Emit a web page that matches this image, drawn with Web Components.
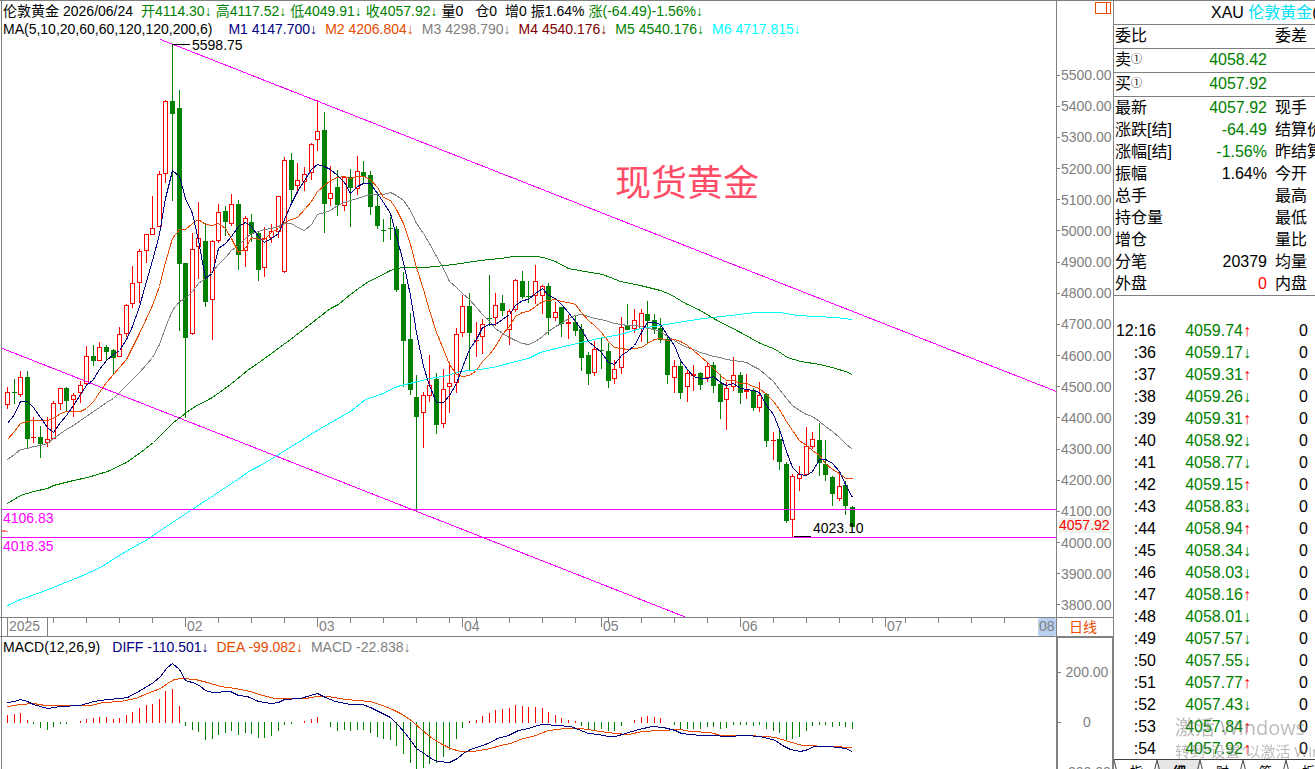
<!DOCTYPE html>
<html lang="zh-CN">
<head>
<meta charset="utf-8">
<title>伦敦黄金 日线</title>
<style>
html, body { margin: 0; height: 100%; overflow: hidden; background: #fff; }
body { font-family: "Liberation Sans", "Noto Sans CJK SC", sans-serif; font-size: 14px; color: #000; }
</style>
</head>
<body>
<gold-terminal></gold-terminal>
<script>
const GREEN = '#008000', RED = '#ff0000', NAVY = '#000080', ORANGE = '#e64b00', GRAY = '#808080', PINK = '#ff00ff', CYAN = '#00ffff';

/* direction, high, body top, body bottom, low */
const CANDLES = `r387,392,404,408 g379,392,392,403 r371,377,394,396 g371,377,438,448 r417,437,437,442 g426,437,443,457 r417,439,442,446 r401,403,438,438 r388,388,403,409 g387,388,400,411
r393,395,399,416 r381,385,392,402 r346,356,383,384 g345,356,360,365 r342,347,360,360 g345,347,351,360 g349,350,357,374 r327,334,356,356 r304,305,333,336 r266,283,303,307
r249,251,282,302 r234,234,250,262 r196,228,234,234 r171,174,226,226 r100,101,173,182 g44,101,113,200 g90,108,263,330 g263,263,337,417 r233,249,333,334 r202,238,246,278
g223,241,301,306 r240,241,299,339 r204,212,240,242 g206,211,221,235 r194,204,223,225 g200,204,254,269 r216,218,250,266 g214,222,233,241 g232,233,269,280 r227,238,267,276
r224,231,237,242 r196,196,231,237 r157,160,271,272 g153,160,189,204 r163,180,185,193 r167,174,181,190 r143,144,172,179 r100,131,139,150 g112,130,203,232 r166,193,198,205
g170,187,204,215 r177,177,205,210 g169,177,187,226 r156,171,188,194 g161,172,176,183 g171,175,206,214 g192,206,225,228 g219,230,230,241 g217,228,228,239 g226,229,289,291
g272,284,340,386 g313,339,389,394 g375,397,416,511 r392,395,412,447 r355,385,395,401 g373,379,424,433 r369,389,423,427 r362,383,386,412 r328,334,382,392 r295,306,332,336
g293,306,332,370 r322,340,340,356 r319,324,336,353 g275,318,318,325 r293,305,317,325 g295,303,310,315 r309,311,329,344 r279,280,309,311 g271,281,296,298 g281,296,296,302
r265,281,295,303 r285,286,295,313 g283,286,317,334 r302,312,317,320 g307,307,323,336 r315,322,323,338 g315,322,330,335 g324,329,357,370 g352,355,373,384 r341,349,372,375
g337,350,350,368 g343,351,380,387 r360,369,378,383 r317,327,367,373 g304,326,329,329 r309,320,328,332 r309,313,328,341 g301,314,320,343 g314,320,328,333 g318,328,339,342
g337,339,374,383 r360,366,377,392 g359,366,392,398 r369,373,386,401 r365,374,375,390 g372,373,384,389 r363,366,377,381 g362,365,385,392 g374,384,401,418 r382,388,399,429
r357,375,386,390 g372,375,392,403 r374,390,391,398 g388,390,407,410 r382,395,407,411 g393,394,440,446 r432,440,440,459 g431,439,461,469 g462,464,520,522 r474,476,519,536
r466,474,478,490 r427,446,474,474 r432,439,446,448 g423,440,462,475 g440,464,474,480 g476,477,493,505 r473,486,498,500 g481,485,505,514 g506,507,526,526`
  .trim().split(/\s+/).map(s => { const [hi, top, bot, lo] = s.slice(1).split(',').map(Number); return { up: s[0] === 'r', hi, top, bot, lo }; });

/* bar ends around the zero line at 722; zeros are missing bars */
const BARS = '715 714 713 720 723 727 729 726 723 723 0 721 719 718 717 717 719 718 715 712 708 705 704 699 691 689 706 725 729 731 739 738 734 732 730 734 732 733 737 737 735 730 724 723 0 721 719 717 0 726 730 729 730 729 729 732 736 738 739 745 753 762 768 767 763 762 756 749 738 727 721 720 716 713 710 709 708 705 706 707 707 708 712 715 718 720 721 725 729 729 728 730 730 725 0 720 717 716 717 718 0 724 728 728 728 728 726 726 728 727 724 724 724 725 724 728 730 732 739 738 736 730 725 724 724 726 725 726 728'.split(' ').map(Number);

const M60 = '7,503 20,495 33,491 47,488 53,485 73,480 87,477 107,471 126,462 140,452 153,442 163,432 173,422 181,416 186,412 193,407 212,397 230,384 247,370 260,361 290,339 330,308 338,304 350,294 365,283 390,270 401,267 425,267 445,265 460,263 480,260 500,258 513,256 535,256 543,257 555,261 568,268 590,272 602,274 610,277 620,281 640,285 660,290 670,294 685,303 700,310 713,318 740,332 760,343 775,349 787,357 800,361 820,364 835,368 845,371 852,374';
const M200 = '7,605 20,599 40,592 60,584 80,576 100,567 114,558 127,550 147,539 160,530 187,512 207,499 240,477 250,470 260,465 275,456 320,428 350,411 365,399 380,394 397,386 417,381 430,378 447,375 460,371 480,369 497,366 515,361 528,358 540,352 555,348 568,345 585,341 598,338 620,334 640,328 660,325 690,320 703,318 730,315 755,312 780,312 797,315 815,316 835,317 852,319';
const DIFF = '7,702 14,701 20,699 27,701 33,704 40,706 47,708 60,706 80,705 93,701 107,699 120,698 127,697 140,690 153,682 160,676 166,668 172,663 179,669 185,680 195,683 200,686 205,690 212,692 230,691 238,695 247,696 258,701 271,703 278,702 284,699 300,698 317,693 325,697 335,701 350,704 362,704 370,707 384,714 390,717 398,725 405,733 411,741 416,748 425,754 432,759 438,761 449,762 457,758 463,753 470,749 482,745 490,742 497,738 508,735 518,730 528,728 537,725 543,724 557,725 570,726 578,729 588,733 598,734 608,736 615,736 625,733 638,729 652,726 663,727 675,730 681,733 700,735 712,735 727,736 745,735 760,736 775,740 782,745 790,749 800,751 808,749 813,746 830,746 845,748 852,751';
const DEA = '7,706 20,704 33,703 45,705 90,705 103,702 120,701 135,698 147,693 160,688 167,683 174,679 182,678 195,679 207,682 220,686 235,688 250,691 262,695 275,698 305,698 317,696 328,696 345,699 370,701 382,705 392,709 402,714 412,721 422,730 432,738 440,743 450,748 460,751 473,751 490,748 500,745 510,743 520,739 535,735 548,730 565,728 580,728 600,731 615,733 628,734 642,731 660,730 680,729 690,731 710,732 720,735 745,735 765,736 775,737 788,741 802,745 830,746 852,747';

const barX = i => Math.round(7 + 6.6 * i);
const rect = (x, y, w, h, c) => `<rect x="${x}" y="${y}" width="${w}" height="${h}" fill="${c}"/>`;
const line = (pts, c) => `<polyline points="${pts}" fill="none" stroke="${c}" transform="translate(.5 .5)"/>`;

/* moving average of the closes, with earlier values given for the first bars */
function average(n, head) {
  const close = CANDLES.map(c => c.up ? c.top : c.bot);
  return close.map((_, i) => {
    const y = i < n - 1 ? head[i] : close.slice(i - n + 1, i + 1).reduce((a, b) => a + b) / n;
    return y === undefined ? '' : barX(i) + ',' + Math.round(y);
  }).join(' ');
}

function define(name, template, setup) {
  const t = document.createElement('template');
  t.innerHTML = template;
  customElements.define(name, class extends HTMLElement {
    constructor() {
      super();
      this.attachShadow({ mode: 'open' }).append(t.content.cloneNode(true));
    }
    connectedCallback() { if (setup) setup(this.shadowRoot, this); }
  });
}

define('quote-line', `<style>
:host { display: flex; height: 18px; line-height: 18px; white-space: pre; gap: var(--gap, 4px); padding-left: 3px; }
</style><slot></slot>`);

define('price-chart', `<style>
:host { display: block; min-width: 0; overflow: hidden; }
header { padding-top: 1px; }
quote-line span { color: var(--c, #000); }
.ma { --gap: 8px; }
.s4 { margin-right: 4px; } .s8 { margin-right: 8px; }
svg { display: block; width: 100%; height: 579px; font-size: 14px; }
</style>
<header>
<quote-line><span>伦敦黄金</span><span class="s4">2026/06/24</span><span style="--c:#008000">开4114.30↓</span><span style="--c:#008000">高4117.52↓</span><span style="--c:#008000">低4049.91↓</span><span style="--c:#008000">收4057.92↓</span><span class="s8">量0</span><span class="s4">仓0</span><span>增0</span><span>振1.64%</span><span style="--c:#008000">涨(-64.49)-1.56%↓</span></quote-line>
<quote-line class="ma"><span class="s8">MA(5,10,20,60,60,120,120,200,6)</span><span style="--c:#000080">M1 4147.700↓</span><span style="--c:#e64b00">M2 4206.804↓</span><span style="--c:#808080">M3 4298.790↓</span><span style="--c:#800000">M4 4540.176↓</span><span style="--c:#008000">M5 4540.176↓</span><span style="--c:#00ffff">M6 4717.815↓</span></quote-line>
</header>
<svg role="img" aria-label="伦敦黄金日线"><g transform="translate(0 -38)"></g></svg>`, root => {
  let s = '<g shape-rendering="crispEdges">';
  s += CANDLES.map((c, i) => {
    const x = barX(i), col = c.up ? RED : GREEN, h = c.bot - c.top + 1;
    return rect(x, c.hi, 1, c.lo - c.hi + 1, col) + rect(x - 2, c.top, 5, h, col) + (c.up && h > 2 ? rect(x - 1, c.top + 1, 3, h - 2, '#fff') : '');
  }).join('');
  s += line(M200, CYAN) + line(M60, GREEN);
  s += line(average(20, [459, 454, 449, 448, 446, 445, 443, 438, 433, 429, 425, 420, 416, 411, 407, 402, 398, 392, 385]), GRAY);
  s += line(average(10, [439, 431, 423, 421, 420, 420, 420, 418, 413]), ORANGE);
  s += line(average(5, [423, 414, 401, 401]), NAVY);
  s += rect(2, 509, '100%', 1, PINK) + rect(2, 537, '100%', 1, PINK);
  s += line('160,39 1056,391', PINK) + line('2,348 686,617', PINK);
  s += rect(172, 44, 18, 1, '#000') + rect(794, 536, 17, 1, '#000');
  s += rect(2, 530, 4, 2, '#ff8080') + rect(5, 531, 3, 1, '#ff8080') + '</g>';
  s += '<text x="192" y="50">5598.75</text><text x="813" y="533">4023.10</text>';
  s += `<text x="3" y="523" fill="${PINK}">4106.83</text><text x="3" y="551" fill="${PINK}">4018.35</text>`;
  s += '<text x="615" y="196" font-size="36" fill="#ff4d67">现货黄金</text>';
  root.querySelector('g').innerHTML = s;
});

define('time-axis', `<style>
:host { display: block; box-sizing: border-box; height: 20px; border: solid #808080; border-width: 1px 0; overflow: hidden; min-width: 0; }
svg { display: block; width: 100%; height: 18px; font-size: 14px; fill: #808080; }
</style><svg></svg>`, root => {
  const short = [27, 53, 86, 119, 152, 218, 251, 284, 350, 383, 416, 449, 476, 509, 542, 575, 608, 641, 674, 707, 773, 806, 839, 872, 905, 938, 971, 1004];
  const months = [[185, '02'], [317, '03'], [462, '04'], [601, '05'], [740, '06'], [885, '07']];
  root.querySelector('svg').innerHTML = '<rect x="1038" y="0" width="18" height="18" rx="2" fill="#b9d1f0"/>' +
    rect(7, 0, 1, 18, GRAY) + rect(47, 0, 1, 18, GRAY) + short.map(x => rect(x, 0, 1, 5, GRAY)).join('') +
    months.map(([x, t]) => rect(x, 0, 1, 9, GRAY) + `<text x="${x + 2}" y="13">${t}</text>`).join('') +
    '<text x="9" y="13">2025</text><text x="1039" y="13">08</text>';
});

define('macd-chart', `<style>
:host { display: flex; flex-direction: column; min-width: 0; min-height: 0; overflow: hidden; padding-top: 1px; }
quote-line { --gap: 8px; flex: none; }
svg { display: block; width: 100%; flex: 1; min-height: 0; }
.lead { margin-right: 4px; }
</style>
<quote-line><span class="lead">MACD(12,26,9)</span><span style="color:#000080">DIFF -110.501↓</span><span style="color:#e64b00">DEA -99.082↓</span><span style="color:#808080">MACD -22.838↓</span></quote-line>
<svg role="img" aria-label="MACD"><g transform="translate(0 -656)" shape-rendering="crispEdges"></g></svg>`, root => {
  root.querySelector('g').innerHTML = BARS.map((y, i) => !y ? '' : y < 722 ? rect(barX(i), y, 1, 723 - y, RED) : rect(barX(i), 722, 1, y - 721, GREEN)).join('') + line(DEA, ORANGE) + line(DIFF, NAVY);
});

define('axis-label', `<style>
:host { display: flex; align-items: center; height: 16px; line-height: 16px; }
i { flex: none; width: 3px; height: 1px; background: #808080; margin-right: 1px; }
span { flex: 1; text-align: var(--align, left); }
</style><i></i><span><slot></slot></span>`);

define('price-axis', `<style>
:host { position: relative; box-sizing: border-box; display: flex; flex-direction: column; justify-content: space-between; padding: 66px 0 4px; border: solid #808080; border-width: 0 1px; color: #808080; }
button { position: absolute; top: 1px; right: 1px; border: 0; padding: 0; background: none; line-height: 0; }
mark { position: absolute; left: 2px; top: 517px; line-height: 15px; color: #f00; background: #eef5ee; padding-right: 1px; }
</style>
<button aria-label="侧栏"><svg width="17" height="13" fill="none" stroke="#e64b00" shape-rendering="crispEdges"><path d="M.5.5h15v11h-15zM11.5.5v11"/></svg></button>
<mark>4057.92</mark>`, root => {
  for (let p = 5500; p >= 3800; p -= 100) {
    const l = document.createElement('axis-label');
    l.textContent = p + '.00';
    root.insertBefore(l, root.querySelector('mark'));
  }
});

define('macd-axis', `<style>
:host { display: block; box-sizing: border-box; border: solid #808080; border-width: 1px 2px 0; color: #808080; overflow: hidden; padding-top: 9px; --align: center; }
axis-label { height: 50px; }
</style><axis-label>200.00</axis-label><axis-label>0</axis-label><axis-label>-200.00</axis-label>`);

define('period-button', `<style>
:host { display: block; box-sizing: border-box; border: 1px solid #808080; height: 20px; }
button { display: block; width: 100%; height: 18px; border: 0; padding: 0 4px 0 0; background: none; font: inherit; line-height: 18px; color: #e64b00; }
</style><button><slot></slot></button>`);

define('quote-table', `<style>
:host { display: block; font-size: 16px; }
h1 { margin: 0; font: inherit; line-height: 23px; height: 23px; border-bottom: 1px solid #808080; padding-left: 97px; white-space: nowrap; overflow: hidden; }
h1 b { font-weight: normal; color: #00dff5; }
table { width: 100%; border-collapse: collapse; table-layout: fixed; border-bottom: 1px solid #808080; }
th, td { font-weight: normal; padding: 0; height: 22px; line-height: 22px; text-align: left; white-space: nowrap; overflow: hidden; }
.line th, .line td { height: 23px; line-height: 21px; vertical-align: top; border-bottom: 1px solid #808080; }
th:first-child { padding-left: 1px; }
td { text-align: right; color: #000; } td.g { color: #008000; } td.r { color: #f00; }
th:last-child { padding-left: 8px; }
small { font-size: 11px; vertical-align: 2px; line-height: 10px; }
</style>
<h1>XAU <b>伦敦黄金</b>(</h1>
<table><colgroup><col style="width:64px"><col style="width:89px"><col></colgroup><tbody></tbody></table>`, root => {
  const rows = [['委比', '', '委差', 'g', 1], ['卖<small>①</small>', '4058.42', '', 'g', 1], ['买<small>①</small>', '4057.92', '', 'g', 1], ['最新', '4057.92', '现手', 'g'], ['涨跌[结]', '-64.49', '结算价', 'g'], ['涨幅[结]', '-1.56%', '昨结算', 'g'], ['振幅', '1.64%', '今开'], ['总手', '', '最高'], ['持仓量', '', '最低'], ['增仓', '', '量比'], ['分笔', '20379', '均量'], ['外盘', '0', '内盘', 'r']];
  root.querySelector('tbody').innerHTML = rows.map(([a, v, b, c, l]) => `<tr class="${l ? 'line' : ''}"><th>${a}</th><td class="${c || ''}">${v}</td><th>${b}</th></tr>`).join('');
});

define('tick-list', `<style>
:host { display: block; font-size: 16px; padding-top: 24px; }
table { width: 100%; border-collapse: collapse; table-layout: fixed; }
td { padding: 0; height: 22px; line-height: 22px; text-align: right; white-space: nowrap; }
.p { color: #008000; } .up { color: #f00; } td:last-child { padding-right: 7px; }
</style><table><colgroup><col style="width:42px"><col style="width:95px"><col></colgroup><tbody></tbody></table>`, root => {
  const rows = '12:16 4059.74↑,:36 4059.17↓,:37 4059.31↑,:38 4059.26↓,:39 4059.31↑,:40 4058.92↓,:41 4058.77↓,:42 4059.15↑,:43 4058.83↓,:44 4058.94↑,:45 4058.34↓,:46 4058.03↓,:47 4058.16↑,:48 4058.01↓,:49 4057.57↓,:50 4057.55↓,:51 4057.77↑,:52 4057.43↓,:53 4057.84↑,:54 4057.92↑'.split(',');
  root.querySelector('tbody').innerHTML = rows.map(r => {
    const [t, p] = r.split(' ');
    return `<tr><td>${t}</td><td class="p">${p.slice(0, -1)}<span class="${p.endsWith('↑') ? 'up' : ''}">${p.slice(-1)}</span></td><td>0</td></tr>`;
  }).join('');
});

define('tab-strip', `<style>
:host { display: flex; border-top: 1px solid #404040; width: 215px; height: 22px; margin-top: -1px; position: relative; background: #fff; }
button { position: relative; flex: 1; border: 0; padding: 2px 0 0 2px; background: #fff; font: 13px/18px "Liberation Sans", "Noto Sans CJK SC", sans-serif; color: #000; }
button[aria-selected=true] { background: #e6e6e6; font-weight: bold; }
svg { position: absolute; left: 0; top: 0; width: 43px; height: 20px; fill: none; stroke: #404040; }
</style>
<button>指</button><button aria-selected="true">细</button><button>财</button><button>筹</button><button>板</button>`, root => {
  root.querySelectorAll('button').forEach(b => b.insertAdjacentHTML('beforeend', '<svg><path d="M0 0l5 20M43 0l-5 20"/></svg>'));
});

define('activation-note', `<style>
:host { display: block; position: fixed; right: 0; top: 715px; width: 140px; overflow: hidden; white-space: nowrap; color: rgba(120,120,120,.5); font-family: "Open Sans", "Noto Sans CJK SC", sans-serif; pointer-events: none; }
p { margin: 0; font-size: 20px; line-height: 26px; } p + p { font-size: 15px; line-height: 20px; }
</style><p>激活 Windows</p><p>转到“设置”以激活 Windows。</p>`);

define('gold-terminal', `<style>
:host { display: grid; grid-template-columns: 1fr 201px; height: 100vh; box-sizing: border-box; border-top: 1px solid #808080; overflow: hidden; }
main { display: grid; grid-template: auto auto 1fr / 1fr 58px; min-width: 0; min-height: 0; }
.plot { box-shadow: inset 1px 0 #fff, inset 2px 0 #808080; }
aside { min-width: 0; overflow: hidden; }
</style>
<main>
<price-chart class="plot"></price-chart><price-axis></price-axis>
<time-axis class="plot"></time-axis><period-button>日线</period-button>
<macd-chart class="plot"></macd-chart><macd-axis></macd-axis>
</main>
<aside><quote-table></quote-table><tick-list></tick-list><tab-strip></tab-strip></aside>
<activation-note></activation-note>`);
</script>
</body>
</html>
